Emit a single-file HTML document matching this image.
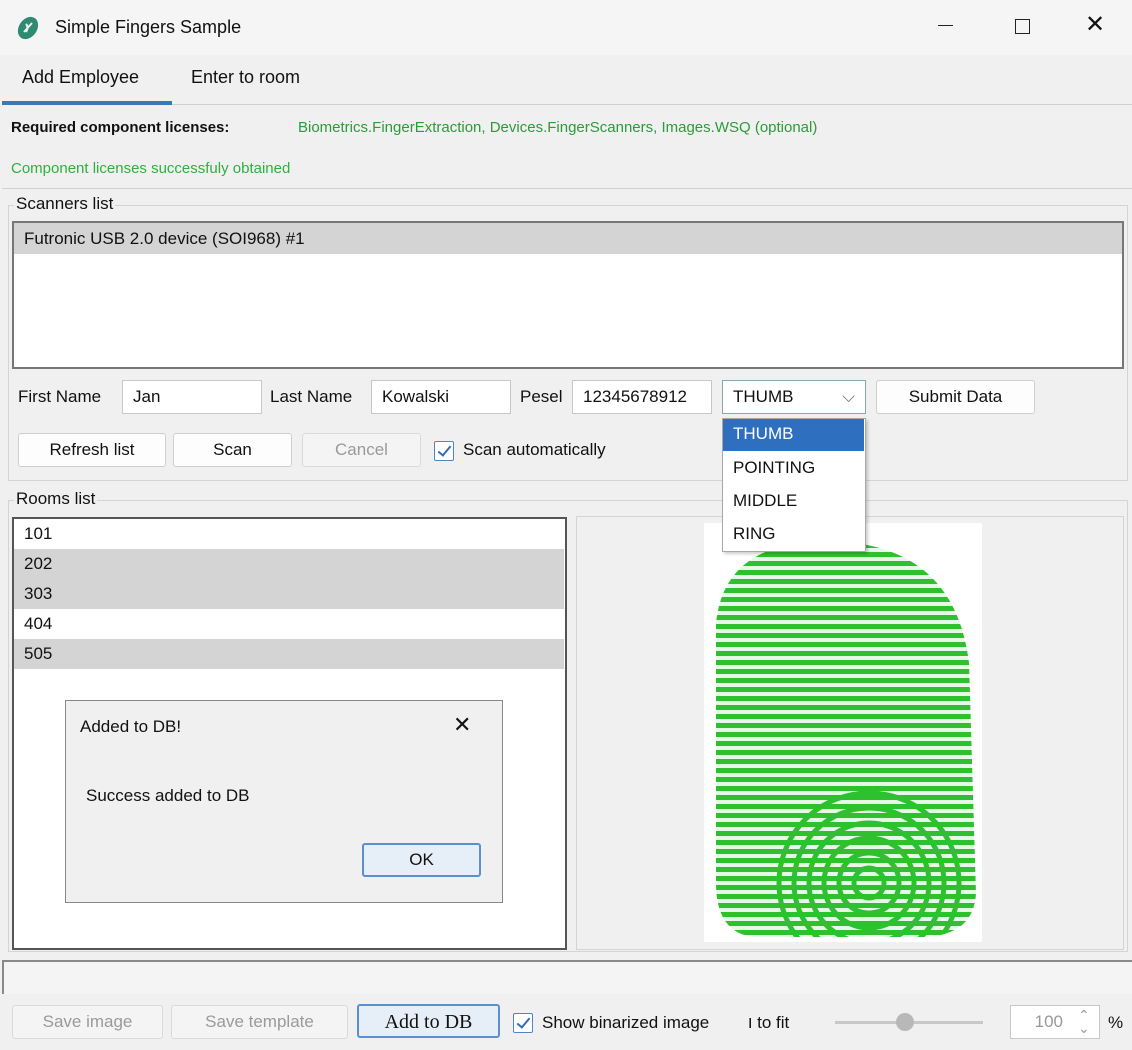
<!DOCTYPE html>
<html><head><meta charset="utf-8"><style>
*{box-sizing:border-box;margin:0;padding:0}
body{width:1132px;height:1050px;background:#f0f0f0;font-family:"Liberation Sans",sans-serif;font-size:17px;color:#111;position:relative;overflow:hidden}
.a{position:absolute}
.btn{position:absolute;background:#fdfdfd;border:1px solid #cfcfcf;border-radius:3px;text-align:center;line-height:32px;height:34px}
.dis{color:#9a9a9a;background:#f4f4f4;border-color:#dadada}
.inp{position:absolute;background:#fff;border:1px solid #c8c8c8;height:34px;line-height:32px;padding-left:10px}
.grp{position:absolute;border:1px solid #d4d4d4}
.lg{position:absolute;background:#f0f0f0;padding:0 2px;font-size:17px}
.cb{position:absolute;width:20px;height:20px;border:1px solid #4a86c8;background:#fff;border-radius:2px}
.cb:after{content:"";position:absolute;left:6px;top:1px;width:5px;height:11px;border:solid #2f6fb8;border-width:0 2px 2px 0;transform:rotate(40deg)}
</style></head><body>
<div class="a" style="left:0;top:0;width:1132px;height:55px;background:#f5f5f5"></div>
<svg class="a" style="left:14px;top:14px" width="28" height="28" viewBox="0 0 28 28"><ellipse cx="14" cy="14" rx="9" ry="12" transform="rotate(35 14 14)" fill="#2e8a70"/><path d="M10 18 L18 9 M12 10 q3 3 0 8" stroke="#e8f3ef" stroke-width="2" fill="none"/></svg>
<div class="a" style="left:55px;top:17px;font-size:18px">Simple Fingers Sample</div>
<div class="a" style="left:938px;top:25px;width:15px;height:1px;background:#222"></div>
<div class="a" style="left:1015px;top:19px;width:15px;height:15px;border:1.5px solid #222"></div>
<div class="a" style="left:1085px;top:10px;font-size:24px;font-weight:300">✕</div>
<div class="a" style="left:22px;top:67px;font-size:18px">Add Employee</div>
<div class="a" style="left:191px;top:67px;font-size:18px">Enter to room</div>
<div class="a" style="left:2px;top:101px;width:170px;height:4px;background:#3a78b8"></div>
<div class="a" style="left:172px;top:104px;width:960px;height:1px;background:#d0d0d0"></div>
<div class="a" style="left:11px;top:119px;font-size:15px;font-weight:bold">Required component licenses:</div>
<div class="a" style="left:298px;top:119px;font-size:15px;color:#2e9a3a">Biometrics.FingerExtraction, Devices.FingerScanners, Images.WSQ (optional)</div>
<div class="a" style="left:11px;top:160px;font-size:15px;color:#2fb040">Component licenses successfuly obtained</div>
<div class="a" style="left:2px;top:188px;width:1130px;height:1px;background:#d0d0d0"></div>
<div class="grp" style="left:8px;top:205px;width:1120px;height:276px"></div>
<div class="lg" style="left:14px;top:194px">Scanners list</div>
<div class="a" style="left:12px;top:221px;width:1112px;height:148px;background:#fff;border:2px solid #777"></div>
<div class="a" style="left:14px;top:223px;width:1108px;height:31px;background:#d4d4d4;padding:6px 0 0 10px">Futronic USB 2.0 device (SOI968) #1</div>
<div class="a" style="left:18px;top:387px">First Name</div>
<div class="inp" style="left:122px;top:380px;width:140px">Jan</div>
<div class="a" style="left:270px;top:387px">Last Name</div>
<div class="inp" style="left:371px;top:380px;width:140px">Kowalski</div>
<div class="a" style="left:520px;top:387px">Pesel</div>
<div class="inp" style="left:572px;top:380px;width:140px">12345678912</div>
<div class="inp" style="left:722px;top:380px;width:144px;border-color:#8aa;">THUMB<span style="position:absolute;right:10px;top:0;color:#666">⌵</span></div>
<div class="btn" style="left:876px;top:380px;width:159px">Submit Data</div>
<div class="btn" style="left:18px;top:433px;width:148px">Refresh list</div>
<div class="btn" style="left:173px;top:433px;width:119px">Scan</div>
<div class="btn dis" style="left:302px;top:433px;width:119px">Cancel</div>
<div class="cb" style="left:434px;top:441px"></div>
<div class="a" style="left:463px;top:440px">Scan automatically</div>
<div class="grp" style="left:8px;top:500px;width:1120px;height:452px"></div>
<div class="lg" style="left:14px;top:489px">Rooms list</div>
<div class="a" style="left:12px;top:517px;width:555px;height:433px;background:#fff;border:2px solid #555"></div>
<div class="a" style="left:14px;top:519px;width:550px;padding-left:10px;line-height:30px">101</div>
<div class="a" style="left:14px;top:549px;width:550px;padding-left:10px;line-height:30px;background:#d4d4d4">202</div>
<div class="a" style="left:14px;top:579px;width:550px;padding-left:10px;line-height:30px;background:#d4d4d4">303</div>
<div class="a" style="left:14px;top:609px;width:550px;padding-left:10px;line-height:30px">404</div>
<div class="a" style="left:14px;top:639px;width:550px;padding-left:10px;line-height:30px;background:#d4d4d4">505</div>
<div class="a" style="left:576px;top:516px;width:548px;height:434px;border:1px solid #d4d4d4"></div>
<div class="a" style="left:65px;top:700px;width:438px;height:203px;background:#f0f0f0;border:1px solid #888"></div>
<div class="a" style="left:80px;top:717px">Added to DB!</div>
<div class="a" style="left:453px;top:712px;font-size:22px">✕</div>
<div class="a" style="left:86px;top:786px">Success added to DB</div>
<div class="btn" style="left:362px;top:843px;width:119px;border:2px solid #5a8fd0;background:#e6eef8;line-height:30px">OK</div>
<svg class="a" style="left:704px;top:523px" width="278" height="419">
<defs><clipPath id="c"><path d="M12 100 Q20 20 120 18 Q250 18 265 140 L272 370 Q270 412 220 414 L50 414 Q12 410 12 360 Z"/></clipPath>
<pattern id="p" width="10" height="9" patternUnits="userSpaceOnUse"><rect width="10" height="9" fill="#e6f8e6"/><rect y="2" width="10" height="5" fill="#2fc02f"/></pattern></defs>
<rect width="278" height="419" fill="#fff"/>
<g clip-path="url(#c)"><rect width="278" height="419" fill="url(#p)"/>
<g fill="none" stroke="#2fc02f" stroke-width="5">
<circle cx="165" cy="360" r="15"/><circle cx="165" cy="360" r="30"/><circle cx="165" cy="360" r="45"/><circle cx="165" cy="360" r="60"/><circle cx="165" cy="360" r="75"/><circle cx="165" cy="360" r="90"/></g></g>
</svg>
<div class="a" style="left:722px;top:418px;width:144px;height:134px;background:#fff;border:1px solid #aaa;box-shadow:2px 2px 3px rgba(0,0,0,.2)"></div>
<div class="a" style="left:723px;top:419px;width:141px;height:32px;background:#2f6fbf;color:#fff;padding:5px 0 0 10px">THUMB</div>
<div class="a" style="left:733px;top:458px">POINTING</div>
<div class="a" style="left:733px;top:491px">MIDDLE</div>
<div class="a" style="left:733px;top:524px">RING</div>
<div class="a" style="left:2px;top:960px;width:1130px;height:34px;background:#f4f4f4;border-top:2px solid #888;border-left:2px solid #888"></div>
<div class="btn dis" style="left:12px;top:1005px;width:151px">Save image</div>
<div class="btn dis" style="left:171px;top:1005px;width:177px">Save template</div>
<div class="btn" style="left:357px;top:1004px;width:143px;border:2px solid #5a8fd0;background:#e6eef8;font-family:'Liberation Serif',serif;font-size:20px">Add to DB</div>
<div class="cb" style="left:513px;top:1013px"></div>
<div class="a" style="left:542px;top:1013px">Show binarized image</div>
<div class="a" style="left:748px;top:1013px">ו to fit</div>
<div class="a" style="left:835px;top:1021px;width:148px;height:3px;background:#c8c8c8"></div>
<div class="a" style="left:896px;top:1013px;width:18px;height:18px;border-radius:50%;background:#b8b8b8"></div>
<div class="inp" style="left:1010px;top:1005px;width:90px;color:#999;text-align:right;padding-right:36px">100</div>
<div class="a" style="left:1078px;top:1009px;color:#999;font-size:14px;line-height:13px">⌃<br>⌄</div>
<div class="a" style="left:1108px;top:1013px">%</div>
</body></html>
